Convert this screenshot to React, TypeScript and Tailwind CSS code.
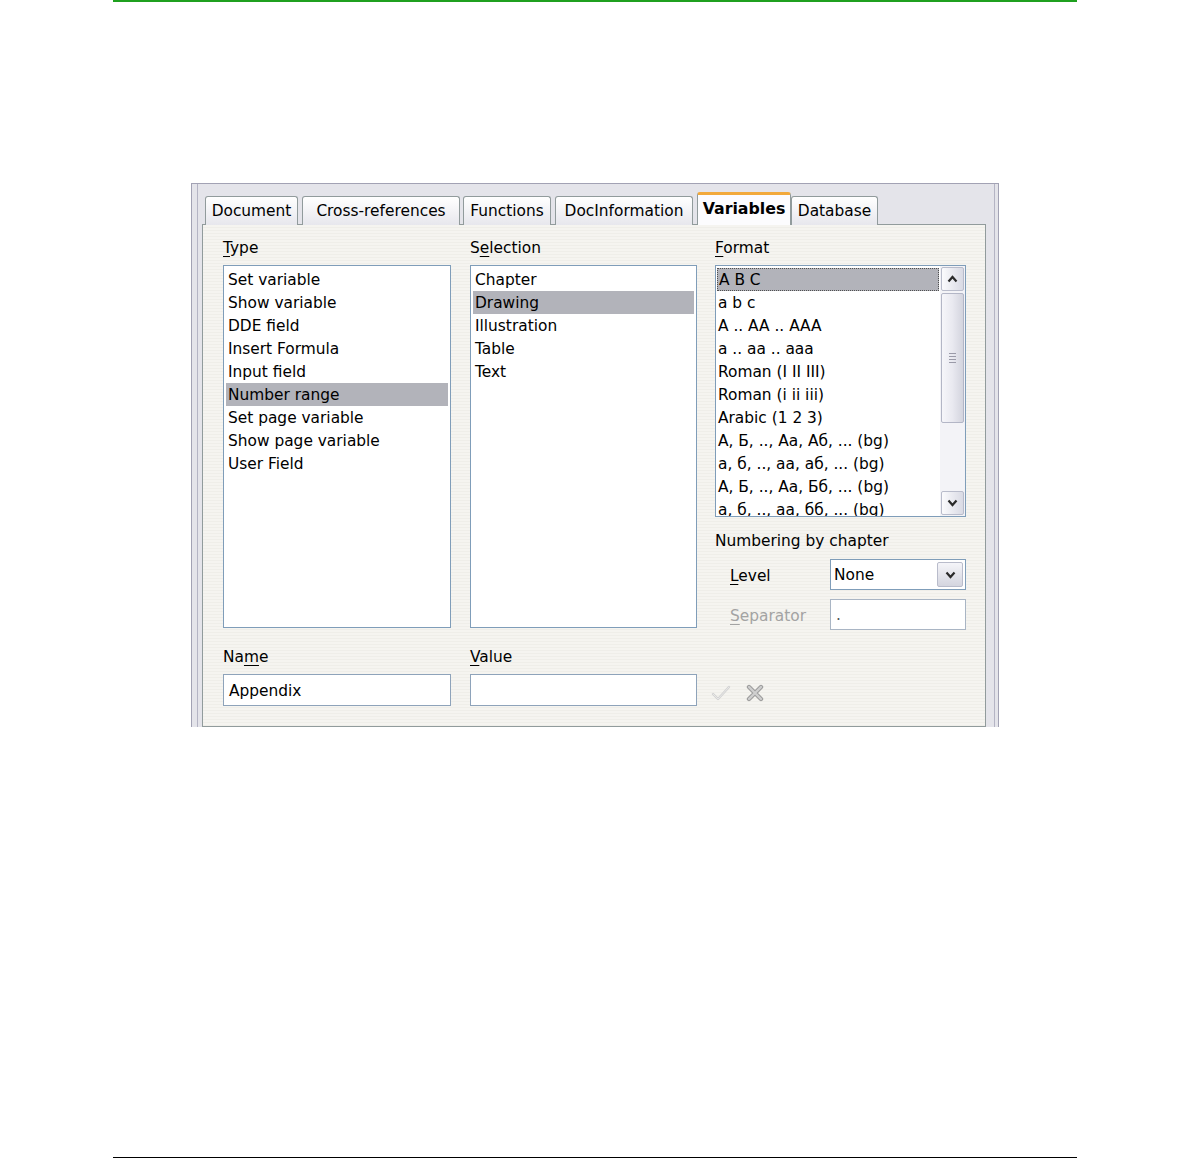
import React from "react";

const typeItems = [
  "Set variable",
  "Show variable",
  "DDE field",
  "Insert Formula",
  "Input field",
  "Number range",
  "Set page variable",
  "Show page variable",
  "User Field",
];

const selectionItems = ["Chapter", "Drawing", "Illustration", "Table", "Text"];

const formatItems = [
  "A B C",
  "a b c",
  "A .. AA .. AAA",
  "a .. aa .. aaa",
  "Roman (I II III)",
  "Roman (i ii iii)",
  "Arabic (1 2 3)",
  "А, Б, .., Аа, Аб, ... (bg)",
  "а, б, .., аа, аб, ... (bg)",
  "А, Б, .., Аа, Бб, ... (bg)",
  "а, б, .., аа, бб, ... (bg)",
];

const tabs = [
  { label: "Document", cls: "w-[93px]" },
  { label: "Cross-references", cls: "w-[158px] ml-[4px]" },
  { label: "Functions", cls: "w-[88px] ml-[3px]" },
  { label: "DocInformation", cls: "w-[138px] ml-[4px]" },
  { label: "Variables", cls: "w-[94px] ml-[4px]", active: true },
  { label: "Database", cls: "w-[87px]" },
];

function Label({ pre, u, post, muted }: { pre?: string; u: string; post?: string; muted?: boolean }) {
  return (
    <div className={`h-[22px] leading-[22px] pt-px ${muted ? "text-[#a3a3a3]" : "text-black"}`}>
      {pre}
      <span className="underline underline-offset-[3px] decoration-1">{u}</span>
      {post}
    </div>
  );
}

function ListBox({ items, selected, w }: { items: string[]; selected: number; w: string }) {
  return (
    <div className={`${w} h-[363px] border border-[#7f9db9] bg-white p-[2px]`}>
      {items.map((t, i) => (
        <div
          key={t}
          className={`h-[23px] leading-[23px] pt-px pl-[2px] whitespace-nowrap ${i === selected ? "bg-[#b2b3ba]" : ""}`}
        >
          {t}
        </div>
      ))}
    </div>
  );
}

function Chevron({ up }: { up?: boolean }) {
  return (
    <svg width="11" height="8" viewBox="0 0 11 8">
      <polyline
        points={up ? "1.5,6.5 5.5,2 9.5,6.5" : "1.5,1.5 5.5,6 9.5,1.5"}
        fill="none"
        stroke="#2a2a2a"
        strokeWidth="2.2"
      />
    </svg>
  );
}

function ScrollButton({ up }: { up?: boolean }) {
  return (
    <div className="h-[24px] w-[23px] rounded-[2px] border border-[#b9bccb] bg-gradient-to-r from-[#fbfbfd] to-[#d9dae4] flex items-center justify-center">
      <Chevron up={up} />
    </div>
  );
}

export default function App() {
  return (
    <div className="w-[1190px] h-[1159px] bg-white flex flex-col px-[113px] font-['DejaVu_Sans',sans-serif] text-[15.4px] text-black">
      <div className="h-[2px] bg-[#1fa01f]" />

      <div className="ml-[78px] mt-[181px] w-[808px] h-[544px] bg-[#e4e4ea] border-x border-t border-[#a2a2b4] shadow-[inset_5px_0_0_#e4e4ea,inset_6px_0_0_#b4b4c4,inset_-3px_0_0_#e4e4ea,inset_-4px_0_0_#b4b4c4] pl-[10px] pr-[12px] pt-[8px] flex flex-col">
        {/* tabs */}
        <div className="flex items-end h-[33px] pl-[3px] relative z-10 -mb-px">
          {tabs.map((t) =>
            t.active ? (
              <div
                key={t.label}
                className={`${t.cls} h-[33px] bg-[#fcfcfe] border-x border-[#919b9c] rounded-t-[3px] border-t-[3px] border-t-[#f2a93b] flex items-center justify-center font-bold text-[15.8px] pb-[3px]`}
              >
                {t.label}
              </div>
            ) : (
              <div
                key={t.label}
                className={`${t.cls} h-[29px] pt-[2px] border border-b-0 border-[#919b9c] rounded-t-[3px] bg-gradient-to-b from-white to-[#e7e7ed] flex items-center justify-center`}
              >
                {t.label}
              </div>
            )
          )}
        </div>

        {/* panel */}
        <div className="flex-1 border border-[#919b9c] bg-[#f3f2ee] bg-[repeating-linear-gradient(180deg,#f5f4f0_0px,#f5f4f0_2px,#efeee9_2px,#efeee9_3px)] pt-[11px] pl-[20px] pr-[19px] pb-[20px]">
          <div className="flex items-start">
            <div className="w-[228px]">
              <Label u="T" post="ype" />
              <div className="mt-[7px]">
                <ListBox items={typeItems} selected={5} w="w-[228px]" />
              </div>
            </div>
            <div className="w-[227px] ml-[19px]">
              <Label pre="S" u="e" post="lection" />
              <div className="mt-[7px]">
                <ListBox items={selectionItems} selected={1} w="w-[227px]" />
              </div>
            </div>
            <div className="w-[251px] ml-[18px]">
              <Label u="F" post="ormat" />
              <div className="mt-[7px] w-[251px] h-[252px] border border-[#7f9db9] bg-white flex">
                <div className="flex-1 overflow-hidden pt-[2px] pl-[1px] pr-[1px]">
                  {formatItems.map((t, i) => (
                    <div
                      key={t}
                      className={`h-[23px] pl-[1px] whitespace-nowrap ${
                        i === 0
                          ? "leading-[21px] pt-px bg-[#b2b3ba] border border-dotted border-[#505050] pl-0"
                          : "leading-[23px] pt-px"
                      }`}
                    >
                      {t}
                    </div>
                  ))}
                </div>
                <div className="w-[25px] bg-[#f3f3f7] flex flex-col p-[1px]">
                  <ScrollButton up />
                  <div className="mt-[2px] h-[130px] w-[23px] rounded-[2px] border border-[#b3b6c6] bg-gradient-to-r from-[#f6f6fa] via-[#e9e9f0] to-[#d3d4de] flex items-center justify-center">
                    <div className="flex flex-col gap-[2px]">
                      <div className="w-[7px] h-px bg-[#9a9aa8]" />
                      <div className="w-[7px] h-px bg-[#9a9aa8]" />
                      <div className="w-[7px] h-px bg-[#9a9aa8]" />
                      <div className="w-[7px] h-px bg-[#9a9aa8]" />
                    </div>
                  </div>
                  <div className="flex-1" />
                  <ScrollButton />
                </div>
              </div>

              <div className="mt-[12px] h-[22px] leading-[22px] pt-px">Numbering by chapter</div>

              <div className="mt-[8px] flex items-center h-[31px]">
                <div className="w-[115px] pl-[15px]">
                  <Label u="L" post="evel" />
                </div>
                <div className="w-[136px] h-[31px] border border-[#7f9db9] bg-white flex items-center justify-between pl-[3px] pr-[2px]">
                  <span className="pt-[3px]">None</span>
                  <div className="w-[26px] h-[25px] rounded-[2px] border border-[#b9bccb] bg-gradient-to-b from-[#f5f5f9] to-[#d4d5df] flex items-center justify-center">
                    <Chevron />
                  </div>
                </div>
              </div>

              <div className="mt-[9px] flex items-center h-[31px]">
                <div className="w-[115px] pl-[15px]">
                  <Label u="S" post="eparator" muted />
                </div>
                <div className="w-[136px] h-[31px] border border-[#a9b5c4] bg-white pl-[5px] leading-[29px] pt-px text-[#555]">
                  .
                </div>
              </div>
            </div>
          </div>

          <div className="flex mt-[15px]">
            <div className="w-[228px]">
              <Label pre="Na" u="m" post="e" />
              <div className="mt-[7px] h-[32px] border border-[#8ea3ba] bg-white pl-[5px] leading-[30px] pt-px">Appendix</div>
            </div>
            <div className="w-[227px] ml-[19px]">
              <Label u="V" post="alue" />
              <div className="mt-[7px] h-[32px] border border-[#8ea3ba] bg-white" />
            </div>
            <div className="ml-[14px] mt-[29px] pt-[6px] flex items-center gap-[15px] h-[32px]">
              <svg width="20" height="18" viewBox="0 0 20 18">
                <path d="M2 10 L7 15 L18 3" fill="none" stroke="#d2d2d2" strokeWidth="2.4" strokeLinecap="round" strokeLinejoin="round" />
                <path d="M2 10 L7 15 L18 3" fill="none" stroke="#ececec" strokeWidth="0.8" strokeLinecap="round" strokeLinejoin="round" />
              </svg>
              <svg width="18" height="18" viewBox="0 0 18 18">
                <path d="M3 3 L15 15 M15 3 L3 15" fill="none" stroke="#9e9e9e" strokeWidth="4.4" strokeLinecap="round" />
                <path d="M3 3 L15 15 M15 3 L3 15" fill="none" stroke="#cfcfcf" strokeWidth="2.2" strokeLinecap="round" />
              </svg>
            </div>
          </div>
        </div>
      </div>

      <div className="flex-1" />
      <div className="h-px bg-black mb-px" />
    </div>
  );
}
